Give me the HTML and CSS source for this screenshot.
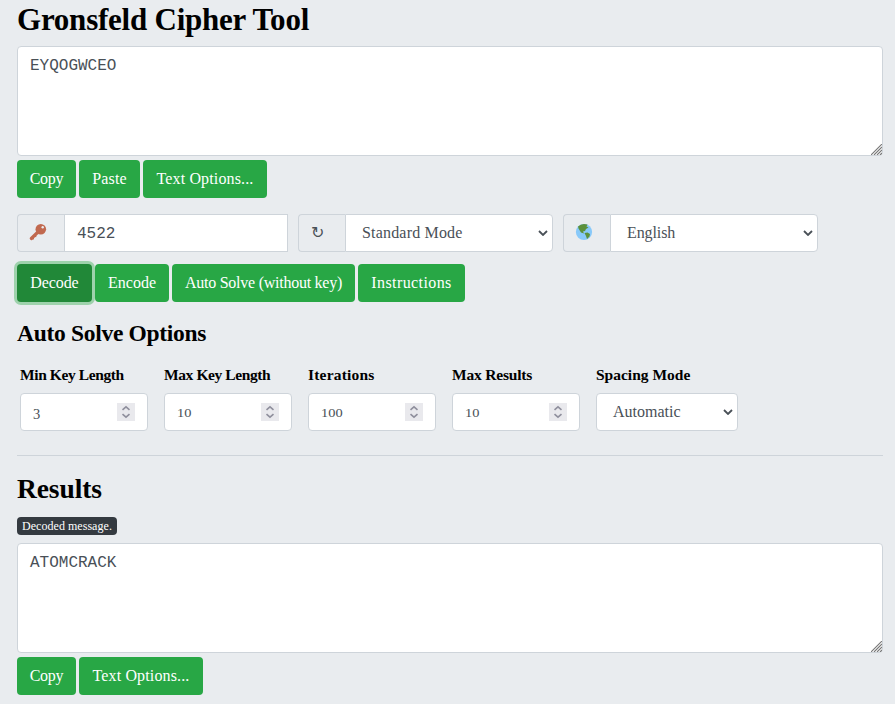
FILE: index.html
```html
<!DOCTYPE html>
<html lang="en">
<head>
<meta charset="utf-8">
<title>Gronsfeld Cipher Tool</title>
<link rel="stylesheet" href="styles.css">
</head>
<body>
<svg class="defs" aria-hidden="true">
  <symbol id="grip" viewBox="0 0 11 11"><path d="M0 11 11 0M3 11 11 3M6 11 11 6M9 11 11 9" stroke="#777" stroke-width="1.100" fill="none"/></symbol>
  <symbol id="down" viewBox="0 0 10 6"><path d="M1 1l4 4 4-4" stroke="#495057" stroke-width="1.8" fill="none"/></symbol>
  <symbol id="spin" viewBox="0 0 18 18"><path d="M5.5 6.8 9 3.8l3.5 3M5.5 11.2l3.5 3 3.5-3" stroke="#8f8f9d" stroke-width="1.6" fill="none"/></symbol>
</svg>
<main>
  <h1>Gronsfeld Cipher Tool</h1>
  <div class="area"><textarea spellcheck="false">EYQOGWCEO</textarea><svg class="grip"><use href="#grip"/></svg></div>
  <div class="buttons">
    <button class="copy">Copy</button><button class="paste">Paste</button><button class="text-options">Text Options...</button>
  </div>
  <div class="settings">
    <div class="group key">
      <span class="addon"><svg width="18" height="18" viewBox="0 0 18 18"><path d="M2.300 15.500 9 9" stroke="#c1694f" stroke-width="3.2" stroke-linecap="round"/><path d="M3 15.300l2 .2M5.500 13l1.800.5" stroke="#c1694f" stroke-width="1.8"/><circle cx="11.800" cy="6.200" r="5.300" fill="#c1694f"/><circle cx="13.700" cy="4.300" r="1.200" fill="#e9ecef"/></svg></span>
      <input class="mono" value="4522">
    </div>
    <div class="group">
      <span class="addon turn">↻</span>
      <div class="select standard"><span>Standard Mode</span><svg><use href="#down"/></svg></div>
    </div>
    <div class="group">
      <span class="addon"><svg width="18" height="18" viewBox="0 0 18 18"><circle cx="9" cy="9" r="8.100" fill="#88c9f9"/><path d="M3 3.500Q5.500 1 9 1l3.500.5-1 2 2 1-2.500 1.500-1 2-2 .5 1 2-3-1-2.500-4zM9.500 10l3-.5 2.500 1.500-.5 2.500-2.500 2.500-1-3z" fill="#5c913b"/></svg></span>
      <div class="select english"><span>English</span><svg><use href="#down"/></svg></div>
    </div>
  </div>
  <div class="buttons">
    <button class="decode">Decode</button><button class="encode">Encode</button><button class="solve">Auto Solve (without key)</button><button class="instructions">Instructions</button>
  </div>
  <h3>Auto Solve Options</h3>
  <div class="options">
    <div class="option"><label class="tight">Min Key Length</label><div class="number"><span class="low">3</span><svg><use href="#spin"/></svg></div></div>
    <div class="option"><label class="tight">Max Key Length</label><div class="number"><span>10</span><svg><use href="#spin"/></svg></div></div>
    <div class="option"><label class="loose">Iterations</label><div class="number"><span>100</span><svg><use href="#spin"/></svg></div></div>
    <div class="option"><label class="snug">Max Results</label><div class="number"><span>10</span><svg><use href="#spin"/></svg></div></div>
    <div class="option wide"><label>Spacing Mode</label><div class="select"><span>Automatic</span><svg><use href="#down"/></svg></div></div>
  </div>
  <hr>
  <h2>Results</h2>
  <span class="badge">Decoded message.</span>
  <div class="area"><textarea spellcheck="false">ATOMCRACK</textarea><svg class="grip"><use href="#grip"/></svg></div>
  <div class="buttons last">
    <button class="copy">Copy</button><button class="text-options">Text Options...</button>
  </div>
</main>
</body>
</html>
```
FILE: styles.css
```css
* { box-sizing: border-box; }
body { margin: 0; background: #e9ecef; color: #000; font: 16px/24px "Liberation Serif", serif; overflow: hidden; }
main { padding: 0 12px 0 17px; }
.defs { position: absolute; width: 0; height: 0; }
h1, h2, h3 { margin: 0; font-weight: 700; white-space: nowrap; }
h1 { height: 46px; font-size: 31px; line-height: 40px; letter-spacing: -.23px; }
h3 { height: 34px; margin-top: 16px; font-size: 23.5px; line-height: 30px; letter-spacing: -.3px; }
h2 { height: 45px; margin-top: 16px; font-size: 27.5px; line-height: 34px; letter-spacing: -.1px; }
.area { position: relative; height: 110px; }
textarea { display: block; width: 100%; height: 110px; padding: 7px 12px 5px; border: 1px solid #ced4da; border-radius: 4px; background: #fff; color: #495057; font: 16px/24px "Liberation Mono", monospace; resize: none; outline: 0; }
.grip { position: absolute; right: 1px; bottom: 1px; width: 11px; height: 11px; }
.buttons { display: flex; gap: 3px; margin-top: 4px; }
button { height: 38px; padding: 0 0 1px; border: 0; border-radius: 4px; background: #28a745; color: #fff; font: 16px/24px "Liberation Serif", serif; white-space: nowrap; }
.copy { width: 59px; letter-spacing: -.3px; }
.paste { width: 61px; letter-spacing: .15px; }
.text-options { width: 124px; letter-spacing: .13px; }
.decode { width: 75px; background: #218838; box-shadow: 0 0 0 3px #9ed2ac; letter-spacing: -.1px; }
.encode { width: 74px; }
.solve { width: 183px; letter-spacing: -.25px; }
.instructions { width: 107px; letter-spacing: .4px; }
.settings { display: flex; gap: 10px; margin: 16px 0 12px; }
.settings + .buttons { margin-top: 0; }
.group { display: flex; width: 255px; height: 38px; }
.key { width: 271px; }
.addon { display: flex; flex: none; align-items: center; width: 47px; padding: 0 0 2px 11px; border: 1px solid #ced4da; border-right: 0; border-radius: 4px 0 0 4px; color: #495057; }
.addon svg { display: block; }
.turn { padding: 0 0 0 12px; font-family: "DejaVu Sans", sans-serif; }
.mono { flex: 1; min-width: 0; height: 38px; padding: 1px 12px 0; border: 1px solid #ced4da; border-radius: 0; background: #fff; color: #495057; font: 16px/24px "Liberation Mono", monospace; outline: 0; }
.select { display: flex; flex: 1; align-items: center; justify-content: space-between; height: 38px; padding: 0 4px 1px 16px; border: 1px solid #ced4da; border-radius: 4px; background: #fff; color: #495057; }
.group .select { border-radius: 0 4px 4px 0; }
.select svg { width: 10px; height: 6px; margin-top: 1px; }
.standard { letter-spacing: .18px; }
.english { letter-spacing: -.1px; }
.options { display: flex; gap: 16px; padding-left: 3px; margin-top: 11px; }
.option { width: 128px; }
.wide { width: 142px; }
label { display: block; height: 30px; font-size: 15.5px; font-weight: 700; line-height: 24px; white-space: nowrap; }
.tight { letter-spacing: -.4px; }
.loose { letter-spacing: .2px; }
.snug { letter-spacing: -.2px; }
.number { display: flex; align-items: center; justify-content: space-between; height: 38px; padding: 0 12px; border: 1px solid #ced4da; border-radius: 4px; background: #fff; color: #495057; }
.number span { padding-top: 1px; font-size: 12px; transform: scaleX(1.2); transform-origin: left; }
.number .low { padding-top: 4px; font-size: 14.5px; transform: none; }
.number svg { width: 18px; height: 18px; background: #e9e9ed; }
hr { height: 1px; margin: 24px 0 0; border: 0; background: #ced4da; }
.badge { display: block; width: 100px; height: 18px; margin-bottom: 8px; padding-left: 5px; border-radius: 4px; background: #343a40; color: #fff; font-size: 12px; line-height: 18px; letter-spacing: .04px; white-space: nowrap; }
```
